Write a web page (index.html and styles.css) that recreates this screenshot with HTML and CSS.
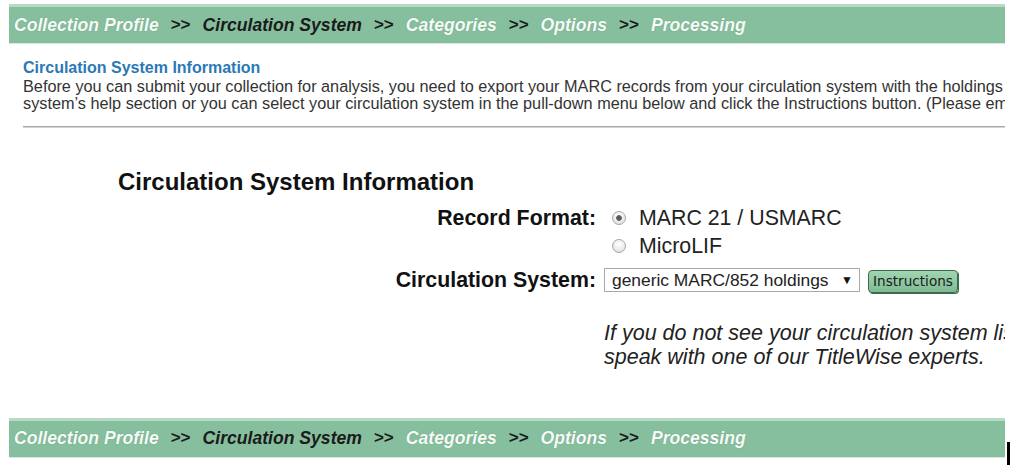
FILE: index.html
```html
<!DOCTYPE html>
<html>
<head>
<meta charset="utf-8">
<link rel="stylesheet" href="styles.css">
</head>
<body>
<div class="page">
  <nav class="crumbs">
    <span class="step">Collection Profile</span>
    <span class="sep">&gt;&gt;</span>
    <span class="step current">Circulation System</span>
    <span class="sep">&gt;&gt;</span>
    <span class="step">Categories</span>
    <span class="sep">&gt;&gt;</span>
    <span class="step">Options</span>
    <span class="sep">&gt;&gt;</span>
    <span class="step">Processing</span>
  </nav>

  <section class="intro">
    <h2 class="intro-title">Circulation System Information</h2>
    <p class="intro-text">Before you can submit your collection for analysis, you need to export your MARC records from your circulation system with the holdings information. For instructions, refer to your circulation<br>system’s help section or you can select your circulation system in the pull-down menu below and click the Instructions button. (Please email us if you have questions.)</p>
  </section>

  <div class="rule"></div>

  <h1 class="title">Circulation System Information</h1>

  <form class="form">
    <div class="label">Record Format:</div>
    <div class="radios">
      <label class="radio"><input type="radio" name="fmt" checked><span>MARC 21 / USMARC</span></label>
      <label class="radio"><input type="radio" name="fmt"><span>MicroLIF</span></label>
    </div>

    <div class="label row2">Circulation System:</div>
    <div class="controls row2">
      <div class="select-wrap">
        <select class="select">
          <option>generic MARC/852 holdings</option>
        </select>
        <span class="arrow">▼</span>
      </div>
      <button type="button" class="btn">Instructions</button>
    </div>

    <div class="spacer"></div>
    <p class="note">If you do not see your circulation system listed, please contact us or<br>speak with one of our TitleWise experts.</p>
  </form>

  <nav class="crumbs bottom">
    <span class="step">Collection Profile</span>
    <span class="sep">&gt;&gt;</span>
    <span class="step current">Circulation System</span>
    <span class="sep">&gt;&gt;</span>
    <span class="step">Categories</span>
    <span class="sep">&gt;&gt;</span>
    <span class="step">Options</span>
    <span class="sep">&gt;&gt;</span>
    <span class="step">Processing</span>
  </nav>
</div>
<div class="cursor"></div>
</body>
</html>
```

FILE: styles.css
```css
html, body {
  margin: 0;
  padding: 0;
  background: #ffffff;
}

body {
  font-family: "Liberation Sans", Arial, sans-serif;
  color: #222;
  overflow: hidden;
  height: 465px;
}

.page {
  width: 996px;
  margin-left: 9px;
  padding-top: 4px;
  overflow: hidden;
}

.crumbs {
  display: flex;
  align-items: center;
  gap: 12px;
  height: 36px;
  padding-left: 5px;
  background: #86bf9e;
  border-top: 3px solid #b7dac5;
  border-bottom: 1px solid #d6eadd;
  font-size: 17.6px;
  font-weight: bold;
  font-style: italic;
  white-space: nowrap;
}

.crumbs .step {
  color: #f7fbf7;
  text-shadow: 0 0 1px rgba(60, 110, 80, 0.5);
}

.crumbs .step.current {
  color: #1b1b1b;
  text-shadow: none;
}

.crumbs .sep {
  font-style: normal;
  color: #1b1b1b;
  font-size: 17px;
}

.crumbs.bottom {
  margin-top: 49px;
  padding-bottom: 2px;
  height: 34px;
}

.intro {
  padding-left: 14px;
  margin-top: 14px;
}

.intro-title {
  margin: 0;
  font-size: 16px;
  line-height: 19px;
  font-weight: bold;
  color: #2b79b5;
}

.intro-text {
  margin: 1px 0 0 0;
  font-size: 16.25px;
  line-height: 17px;
  color: #333;
  white-space: nowrap;
}

.rule {
  margin: 14px 0 0 14px;
  height: 1px;
  background: #a8a8a8;
  border-bottom: 1px solid #d4d4d4;
}

.title {
  margin: 40px 0 0 109px;
  font-size: 24px;
  line-height: 28px;
  font-weight: bold;
  color: #111;
}

.form {
  display: grid;
  grid-template-columns: 587px 1fr;
  column-gap: 8px;
  margin-top: 8px;
}

.label {
  text-align: right;
  font-size: 21.33px;
  font-weight: bold;
  line-height: 28px;
  color: #111;
  white-space: nowrap;
}

.radios {
  display: flex;
  flex-direction: column;
}

.radio {
  display: flex;
  align-items: center;
  height: 28px;
  font-size: 21.33px;
  color: #222;
}

.radio input {
  appearance: none;
  -webkit-appearance: none;
  width: 14px;
  height: 14px;
  margin: 0 13px 0 8px;
  border-radius: 50%;
  border: 1px solid #a6a6a6;
  background: radial-gradient(circle at 50% 35%, #ffffff 0%, #ececec 55%, #d4d4d4 100%);
  box-sizing: border-box;
}

.radio input:checked {
  background:
    radial-gradient(circle, #4e4e4e 0, #666 2.5px, transparent 3.2px),
    radial-gradient(circle at 50% 35%, #ffffff 0%, #ececec 55%, #d4d4d4 100%);
}

.row2 {
  margin-top: 8px;
  line-height: 24px;
}

.controls {
  display: flex;
  align-items: center;
  gap: 8px;
  height: 24px;
}

.select-wrap {
  position: relative;
  width: 256px;
  height: 24px;
}

.select {
  appearance: none;
  -webkit-appearance: none;
  width: 100%;
  height: 24px;
  margin: 0;
  padding: 0 0 0 7px;
  border: 1px solid #a9a9a9;
  border-radius: 0;
  background: #fff;
  font-family: "Liberation Sans", Arial, sans-serif;
  font-size: 17.4px;
  color: #222;
}

.arrow {
  position: absolute;
  right: 7px;
  top: 0;
  line-height: 24px;
  font-size: 12px;
  color: #111;
  pointer-events: none;
}

.btn {
  width: 90px;
  height: 23px;
  margin: 2px 0 0 0;
  padding: 0;
  border: 1px solid #3c6b4c;
  border-radius: 4px;
  background: linear-gradient(#a0d6b1, #7fbb95);
  box-shadow: 1px 1px 0 #3a6e4c;
  font-family: "DejaVu Sans", Verdana, sans-serif;
  font-size: 13.6px;
  color: #1a1a1a;
}

.spacer {
  grid-column: 1;
}

.note {
  margin: 29px 0 0 0;
  font-size: 21.5px;
  line-height: 24px;
  font-style: italic;
  color: #222;
  white-space: nowrap;
}

.cursor {
  position: absolute;
  left: 1007px;
  top: 442px;
  width: 3px;
  height: 23px;
  background: #000;
}
```
